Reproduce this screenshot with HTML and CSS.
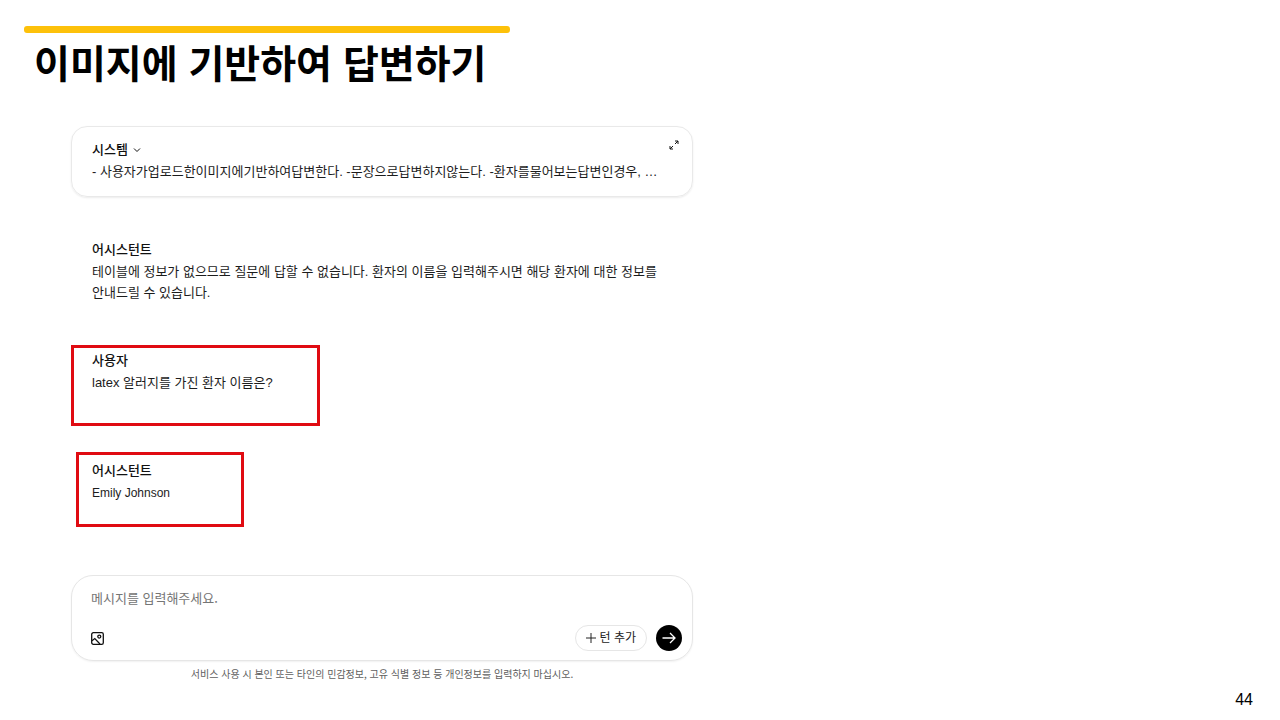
FILE: index.html
```html
<!DOCTYPE html>
<html lang="ko">
<head>
<meta charset="utf-8">
<meta name="viewport" content="width=device-width, initial-scale=1">
<title>이미지에 기반하여 답변하기</title>
<link rel="stylesheet" href="styles.css">
</head>
<body>
<div class="slide">
  <header class="slide-header">
    <h1 class="slide-title">이미지에 기반하여 답변하기</h1>
  </header>

  <main class="chat">
    <section class="system-card">
      <div class="system-main">
        <button class="role role-toggle" type="button">시스템
          <svg class="chevron" viewBox="0 0 8 8" aria-hidden="true"><path d="M1 2.5 4 5.5 7 2.5"/></svg>
        </button>
        <p class="text text-clip">- 사용자가업로드한이미지에기반하여답변한다. -문장으로답변하지않는다. -환자를물어보는답변인경우, …</p>
      </div>
      <button class="expand" type="button" aria-label="확대">
        <svg viewBox="0 0 10 10" aria-hidden="true"><path d="M6 4 9 1M6 1h3v3M4 6 1 9M1 6v3h3"/></svg>
      </button>
    </section>

    <article class="message">
      <h2 class="role">어시스턴트</h2>
      <p class="text">테이블에 정보가 없으므로 질문에 답할 수 없습니다. 환자의 이름을 입력해주시면 해당 환자에 대한 정보를 안내드릴 수 있습니다.</p>
    </article>

    <article class="message marked marked-question">
      <h2 class="role">사용자</h2>
      <p class="text">latex 알러지를 가진 환자 이름은?</p>
    </article>

    <article class="message marked marked-answer">
      <h2 class="role">어시스턴트</h2>
      <p class="text text-latin">Emily Johnson</p>
    </article>

    <form class="composer">
      <textarea class="composer-input" rows="1" aria-label="메시지" placeholder="메시지를 입력해주세요."></textarea>
      <div class="composer-bar">
        <button class="attach" type="button" aria-label="이미지 첨부">
          <svg viewBox="0 0 13 13" aria-hidden="true"><rect x=".7" y=".7" width="11.6" height="11.6" rx="1.6"/><circle cx="8.3" cy="4.6" r="1.5"/><path d="M1 8.8 3.8 6.6 9 12"/></svg>
        </button>
        <button class="add-turn" type="button">
          <svg viewBox="0 0 10 10" aria-hidden="true"><path d="M5 0v10M0 5h10"/></svg>턴 추가
        </button>
        <button class="send" type="button" aria-label="보내기">
          <svg viewBox="0 0 14 12" aria-hidden="true"><path d="M.5 6h12.5M8 1l5 5-5 5"/></svg>
        </button>
      </div>
    </form>
    <p class="notice">서비스 사용 시 본인 또는 타인의 민감정보, 고유 식별 정보 등 개인정보를 입력하지 마십시오.</p>
  </main>

  <footer class="slide-footer">44</footer>
</div>
</body>
</html>
```
FILE: styles.css
```css
* {
  box-sizing: border-box;
}

body {
  margin: 0;
  background: #fff;
  color: #111;
  font-family: "Liberation Sans", "Noto Sans CJK KR", sans-serif;
}

h1, h2, p {
  margin: 0;
}

button {
  padding: 0;
  border: 0;
  background: none;
  color: inherit;
  font: inherit;
}

svg {
  display: block;
  fill: none;
  stroke: currentColor;
}

.slide {
  display: flex;
  flex-direction: column;
  min-height: 100vh;
  padding: 26px 24px 8px;
}

.slide-header {
  align-self: flex-start;
  width: 486px;
  max-width: 100%;
}

.slide-header::before {
  content: "";
  display: block;
  height: 7px;
  border-radius: 3px;
  background: #fdc10a;
}

.slide-title {
  padding: 4px 10px 0;
  color: #000;
  font-family: "Noto Sans CJK KR", sans-serif;
  font-size: 39px;
  font-weight: 700;
  line-height: 48px;
  white-space: nowrap;
}

.chat {
  display: flex;
  flex-direction: column;
  width: 100%;
  max-width: 669px;
  padding: 41px 0 0 47px;
}

.system-card {
  display: flex;
  justify-content: space-between;
  padding: 12px 13px 14px 20px;
  border: 1px solid #e9e9e9;
  border-radius: 16px;
  box-shadow: 0 1px 2px rgba(0, 0, 0, 0.08);
}

.system-main {
  min-width: 0;
}

.role {
  font-size: 13px;
  font-weight: 500;
  line-height: 22px;
}

.role-toggle {
  display: flex;
  align-items: center;
  gap: 5px;
}

.chevron {
  width: 8px;
  height: 8px;
}

.text {
  color: #1c1c1c;
  font-size: 13px;
  line-height: 21px;
}

.text-latin {
  font-size: 12px;
  line-height: 22px;
}

.text-clip {
  overflow: hidden;
  text-overflow: ellipsis;
  white-space: nowrap;
}

.expand {
  align-self: flex-start;
  padding-top: 1px;
}

.expand svg {
  width: 10px;
  height: 10px;
}

.message {
  margin-top: 42px;
  padding: 0 21px;
}

.marked {
  align-self: flex-start;
  border: 3px solid #e00b12;
}

.marked-question {
  width: 249px;
  padding: 2px 18px 30px;
}

.marked-answer {
  width: 168px;
  margin: 26px 0 0 5px;
  padding: 5px 13px 20px;
}

.composer {
  margin-top: 48px;
  padding: 12px 10px 9px 19px;
  border: 1px solid #e6e6e6;
  border-radius: 22px;
  box-shadow: 0 1px 2px rgba(0, 0, 0, 0.06);
}

.composer-input {
  display: block;
  width: 100%;
  height: 20px;
  padding: 0;
  border: 0;
  outline: 0;
  resize: none;
  background: none;
  font-family: "Noto Sans CJK KR", sans-serif;
  font-size: 13px;
  line-height: 20px;
}

.composer-input::placeholder {
  color: #757575;
}

.composer-bar {
  display: flex;
  align-items: center;
  gap: 9px;
  margin-top: 17px;
}

.attach {
  margin-right: auto;
}

.attach svg {
  width: 13px;
  height: 13px;
  stroke-width: 1.3;
}

.add-turn {
  display: flex;
  align-items: center;
  gap: 4px;
  height: 26px;
  padding: 0 10px;
  border: 1px solid #e6e6e6;
  border-radius: 13px;
  color: #222;
  font-size: 12px;
  line-height: 22px;
}

.add-turn svg {
  width: 10px;
  height: 10px;
}

.send {
  display: grid;
  place-items: center;
  width: 26px;
  height: 26px;
  border-radius: 50%;
  background: #000;
  color: #fff;
}

.send svg {
  width: 14px;
  height: 12px;
  stroke-width: 1.3;
}

.notice {
  margin-top: 5px;
  color: #606060;
  font-family: "Noto Sans CJK KR", sans-serif;
  font-size: 10px;
  line-height: 16px;
  text-align: center;
}

.slide-footer {
  margin-top: auto;
  padding-right: 3px;
  color: #000;
  font-size: 16px;
  line-height: 24px;
  text-align: right;
}
```
